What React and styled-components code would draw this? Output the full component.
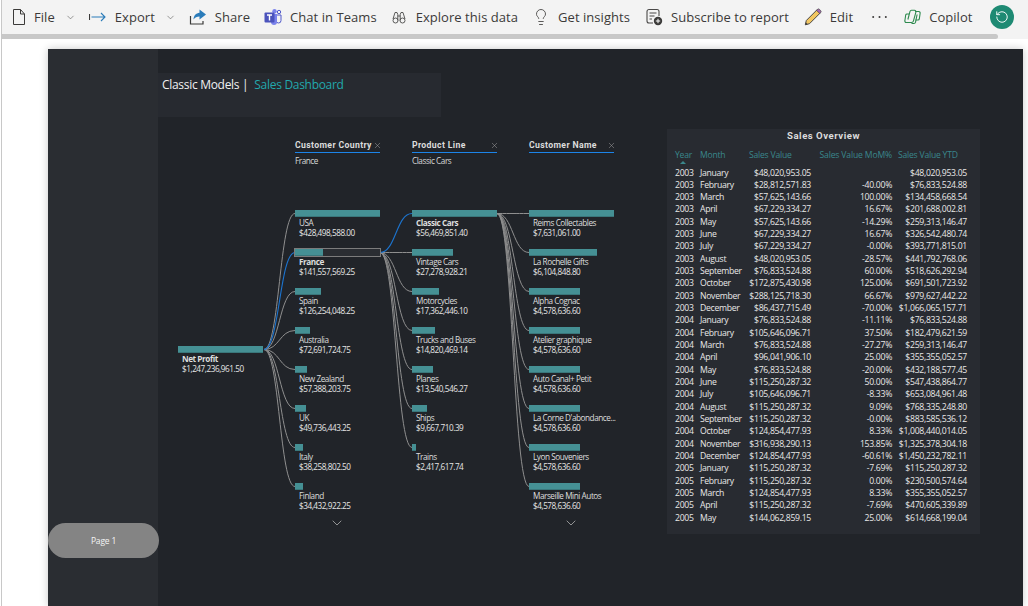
import React from 'react';
import styled, { createGlobalStyle } from 'styled-components';
import { ChevronDown, Lightbulb, RotateCcw, X } from 'lucide-react';

const GlobalStyle = createGlobalStyle`
  html, body {
    margin: 0;
    padding: 0;
    background: #fff;
    overflow: hidden;
  }
  #root {
    height: 606px;
    overflow: hidden;
  }
`;

const ROW_H = 39;
const FIRST_ROW = 96.5;
const NET_Y = 232.5;

const countries = [
  { name: 'USA', value: '$428,498,588.00', width: 85 },
  { name: 'France', value: '$141,557,569.25', width: 28, selected: true },
  { name: 'Spain', value: '$126,254,048.25', width: 26 },
  { name: 'Australia', value: '$72,691,724.75', width: 15 },
  { name: 'New Zealand', value: '$57,388,203.75', width: 12 },
  { name: 'UK', value: '$49,736,443.25', width: 11 },
  { name: 'Italy', value: '$38,258,802.50', width: 8 },
  { name: 'Finland', value: '$34,432,922.25', width: 7.5 },
];

const products = [
  { name: 'Classic Cars', value: '$56,469,851.40', width: 85, bold: true },
  { name: 'Vintage Cars', value: '$27,278,928.21', width: 41 },
  { name: 'Motorcycles', value: '$17,362,446.10', width: 27 },
  { name: 'Trucks and Buses', value: '$14,820,469.14', width: 23 },
  { name: 'Planes', value: '$13,540,546.27', width: 21 },
  { name: 'Ships', value: '$9,667,710.39', width: 15 },
  { name: 'Trains', value: '$2,417,617.74', width: 4 },
];

const customers = [
  { name: 'Reims Collectables', value: '$7,631,061.00', width: 85 },
  { name: 'La Rochelle Gifts', value: '$6,104,848.80', width: 68 },
  { name: 'Alpha Cognac', value: '$4,578,636.60', width: 51 },
  { name: 'Atelier graphique', value: '$4,578,636.60', width: 51 },
  { name: 'Auto Canal+ Petit', value: '$4,578,636.60', width: 51 },
  { name: "La Corne D'abondance...", value: '$4,578,636.60', width: 51 },
  { name: 'Lyon Souveniers', value: '$4,578,636.60', width: 51 },
  { name: 'Marseille Mini Autos', value: '$4,578,636.60', width: 51 },
];

const sales = [
  ['2003', 'January', '$48,020,953.05', '', '$48,020,953.05'],
  ['2003', 'February', '$28,812,571.83', '-40.00%', '$76,833,524.88'],
  ['2003', 'March', '$57,625,143.66', '100.00%', '$134,458,668.54'],
  ['2003', 'April', '$67,229,334.27', '16.67%', '$201,688,002.81'],
  ['2003', 'May', '$57,625,143.66', '-14.29%', '$259,313,146.47'],
  ['2003', 'June', '$67,229,334.27', '16.67%', '$326,542,480.74'],
  ['2003', 'July', '$67,229,334.27', '-0.00%', '$393,771,815.01'],
  ['2003', 'August', '$48,020,953.05', '-28.57%', '$441,792,768.06'],
  ['2003', 'September', '$76,833,524.88', '60.00%', '$518,626,292.94'],
  ['2003', 'October', '$172,875,430.98', '125.00%', '$691,501,723.92'],
  ['2003', 'November', '$288,125,718.30', '66.67%', '$979,627,442.22'],
  ['2003', 'December', '$86,437,715.49', '-70.00%', '$1,066,065,157.71'],
  ['2004', 'January', '$76,833,524.88', '-11.11%', '$76,833,524.88'],
  ['2004', 'February', '$105,646,096.71', '37.50%', '$182,479,621.59'],
  ['2004', 'March', '$76,833,524.88', '-27.27%', '$259,313,146.47'],
  ['2004', 'April', '$96,041,906.10', '25.00%', '$355,355,052.57'],
  ['2004', 'May', '$76,833,524.88', '-20.00%', '$432,188,577.45'],
  ['2004', 'June', '$115,250,287.32', '50.00%', '$547,438,864.77'],
  ['2004', 'July', '$105,646,096.71', '-8.33%', '$653,084,961.48'],
  ['2004', 'August', '$115,250,287.32', '9.09%', '$768,335,248.80'],
  ['2004', 'September', '$115,250,287.32', '-0.00%', '$883,585,536.12'],
  ['2004', 'October', '$124,854,477.93', '8.33%', '$1,008,440,014.05'],
  ['2004', 'November', '$316,938,290.13', '153.85%', '$1,325,378,304.18'],
  ['2004', 'December', '$124,854,477.93', '-60.61%', '$1,450,232,782.11'],
  ['2005', 'January', '$115,250,287.32', '-7.69%', '$115,250,287.32'],
  ['2005', 'February', '$115,250,287.32', '0.00%', '$230,500,574.64'],
  ['2005', 'March', '$124,854,477.93', '8.33%', '$355,355,052.57'],
  ['2005', 'April', '$115,250,287.32', '-7.69%', '$470,605,339.89'],
  ['2005', 'May', '$144,062,859.15', '25.00%', '$614,668,199.04'],
];

const curve = (x0, y0, x1, y1) => {
  const mid = (x0 + x1) / 2;
  return `M${x0} ${y0} C${mid} ${y0} ${mid} ${y1} ${x1} ${y1}`;
};
const rowY = (i) => FIRST_ROW + i * ROW_H;

function FileIcon() {
  return (
    <svg width="14" height="18" viewBox="0 0 14 18" fill="none" stroke="#3b3a39" strokeWidth="1">
      <path d="M1.5 1.5h7l4 4.5v10.5h-11z" />
      <path d="M8.5 1.5v4.5h4" />
    </svg>
  );
}

function ExportIcon() {
  return (
    <svg width="18" height="12" viewBox="0 0 18 12" fill="none" strokeWidth="1.1">
      <path d="M0.500 3v6" stroke="#3b3a39" />
      <path d="M2.500 6h13.500M12 2l4 4-4 4" stroke="#2b7cba" />
    </svg>
  );
}

function ShareIcon() {
  return (
    <svg width="18" height="18" viewBox="0 0 18 18">
      <path d="M1.5 8v8h12.5v-3" fill="none" stroke="#3b3a39" strokeWidth="1.2" />
      <path d="M10.5 1.5l6.5 5-6.5 5V8.6c-2.6 0-4.6.9-6 3 .2-3.900 2.400-6.400 6-6.800z" fill="#2b7cba" />
    </svg>
  );
}

function TeamsIcon() {
  return (
    <svg width="18" height="18" viewBox="0 0 18 18">
      <circle cx="10.500" cy="3.200" r="2.200" fill="#7b83eb" />
      <circle cx="15" cy="4" r="1.700" fill="none" stroke="#5059c9" strokeWidth="1" />
      <path d="M12 7h5v5.500a2.500 2.500 0 0 1-5 0z" fill="none" stroke="#5059c9" strokeWidth="1" />
      <path d="M7 6h6v8a3 3 0 0 1-6 0z" fill="#7b83eb" />
      <rect x="0.500" y="4.500" width="10" height="10" rx="1" fill="#4b53bc" />
      <path d="M3 7h5M5.500 7v5.500" stroke="#fff" strokeWidth="1.400" fill="none" />
    </svg>
  );
}

function BinocularsIcon() {
  return (
    <svg width="16" height="14" viewBox="0 0 16 14" fill="none" stroke="#4a4948" strokeWidth="0.9">
      <path d="M3 2.500h2l.8 2v6" />
      <path d="M11 2.500H9l-.8 2v6" />
      <path d="M5.800 6h2.400" />
      <path d="M3 2.500 1 9" />
      <path d="M11 2.500 13 9" />
      <circle cx="3.500" cy="10.500" r="2.500" />
      <circle cx="10.500" cy="10.500" r="2.500" />
    </svg>
  );
}

function SubscribeIcon() {
  return (
    <svg width="17" height="18" viewBox="0 0 17 18" fill="none">
      <path d="M7 15H3a2 2 0 0 1-2-2V3.500a2 2 0 0 1 2-2h8a2 2 0 0 1 2 2V8" stroke="#4a4948" strokeWidth="1.100" />
      <path d="M3.500 5h7M3.500 8h5M3.500 11h2.500" stroke="#4a4948" strokeWidth="1.100" />
      <circle cx="12" cy="13" r="4.200" fill="#3b3a39" />
      <path d="M12 10.800v4.400M9.800 13h4.400" stroke="#fff" strokeWidth="1" />
    </svg>
  );
}

function PencilIcon() {
  return (
    <svg width="18" height="18" viewBox="0 0 18 18">
      <path d="M13 1.800l3.200 3.200L5.500 15.700 1.300 16.800l1-4.300z" fill="#f2c661" stroke="#4a4948" strokeWidth="1" strokeLinejoin="round" />
      <path d="M13.300 1.500a1.600 1.600 0 0 1 2.300 0l.9.900a1.600 1.600 0 0 1 0 2.300l-.8.800-3.200-3.200z" fill="#a566b5" stroke="#4a4948" strokeWidth="0.800" />
      <path d="M1.300 16.800l.6-2.400 1.800 1.900z" fill="#3b3a39" />
    </svg>
  );
}

function CopilotIcon() {
  return (
    <svg width="17" height="16" viewBox="0 0 17 16" fill="none" stroke="#2d8a4e" strokeWidth="1.100" strokeLinejoin="round">
      <path d="M5.500 5H3a1.400 1.400 0 0 0-1.300 1L.9 11.500a1.500 1.500 0 0 0 1.400 2H7.500a2 2 0 0 0 1.900-1.400l2.500-9a1.500 1.500 0 0 0-1.400-1.900H7.500a1.600 1.600 0 0 0-1.500 1.100L3.900 10.500" />
      <path d="M11.500 11H14a1.400 1.400 0 0 0 1.300-1l.8-5.500a1.500 1.500 0 0 0-1.400-2H11" />
      <path d="M7.500 14.500H10a1.600 1.600 0 0 0 1.500-1.100L13.100 5.500" />
    </svg>
  );
}

function DotsIcon() {
  return (
    <svg width="15" height="4" viewBox="0 0 15 4" fill="#3b3a39">
      <circle cx="1.200" cy="2" r="1" />
      <circle cx="7.500" cy="2" r="1" />
      <circle cx="13.800" cy="2" r="1" />
    </svg>
  );
}

function App() {
  const netLinks = countries.map((c, i) => ({ d: curve(106, NET_Y, 137, rowY(i)), active: c.selected }));
  const countryLinks = products.map((p, i) => ({ d: curve(222, rowY(1), 254, rowY(i)), active: i === 0 }));
  const productLinks = customers.map((c, i) => ({ d: curve(339, rowY(0), 371, rowY(i)), active: false }));
  const links = [...netLinks, ...countryLinks, ...productLinks];

  return (
    <Page>
      <GlobalStyle />
      <Toolbar>
        <ToolRow>
          <ToolItem><FileIcon /><ToolText>File</ToolText><Chevron size={11} strokeWidth={1.2} /></ToolItem>
          <ToolItem $lead={-1}><ExportIcon /><ToolText>Export</ToolText><Chevron size={11} strokeWidth={1.2} /></ToolItem>
          <ToolItem $lead={-1}><ShareIcon /><ToolText>Share</ToolText></ToolItem>
          <ToolItem><TeamsIcon /><ToolText>Chat in Teams</ToolText></ToolItem>
          <ToolItem $lead={1}><BinocularsIcon /><ToolText>Explore this data</ToolText></ToolItem>
          <ToolItem><Lightbulb size={18} strokeWidth={1.1} color="#3b3a39" /><ToolText>Get insights</ToolText></ToolItem>
          <ToolItem $lead={2}><SubscribeIcon /><ToolText>Subscribe to report</ToolText></ToolItem>
          <ToolItem $lead={1}><PencilIcon /><ToolText>Edit</ToolText></ToolItem>
          <ToolItem $lead={5}><DotsIcon /></ToolItem>
          <ToolItem $lead={3}><CopilotIcon /><ToolText>Copilot</ToolText></ToolItem>
          <Avatar><RotateCcw size={14} strokeWidth={1.6} color="#fff" /></Avatar>
        </ToolRow>
        <ScrollThumb />
      </Toolbar>

      <Canvas>
        <Sidebar>
          <PageButton>Page 1</PageButton>
        </Sidebar>
        <Main>
          <TitleBox>
            <TitleText>Classic Models |</TitleText>
            <TitleAccent>Sales Dashboard</TitleAccent>
          </TitleBox>
          <Body>
            <Tree>
              <Links viewBox="0 0 509 440">
                {links.filter((l) => !l.active).map((l, i) => (
                  <path key={i} d={l.d} fill="none" stroke="#8f8f8f" strokeWidth="1" />
                ))}
                {links.filter((l) => l.active).map((l, i) => (
                  <path key={i} d={l.d} fill="none" stroke="#1c74cf" strokeWidth="1.100" />
                ))}
              </Links>
              <RootColumn>
                <TreeNode root item={{ name: 'Net Profit', value: '$1,247,236,961.50', width: 85, bold: true }} />
              </RootColumn>
              <Level title="Customer Country" picked="France" items={countries} more />
              <Level title="Product Line" picked="Classic Cars" items={products} />
              <Level title="Customer Name" items={customers} more />
            </Tree>
            <TablePanel>
              <PanelTitle>Sales Overview</PanelTitle>
              <HeadRow>
                <HeadCell>Year<SortMark /></HeadCell>
                <HeadCell>Month</HeadCell>
                <HeadCell>Sales Value</HeadCell>
                <HeadCell $right>Sales Value MoM%</HeadCell>
                <HeadCell $indent>Sales Value YTD</HeadCell>
              </HeadRow>
              {sales.map((row, i) => (
                <DataRow key={i}>
                  <Cell>{row[0]}</Cell>
                  <Cell>{row[1]}</Cell>
                  <Cell $right>{row[2]}</Cell>
                  <Cell $right>{row[3]}</Cell>
                  <Cell $right>{row[4]}</Cell>
                </DataRow>
              ))}
            </TablePanel>
          </Body>
        </Main>
      </Canvas>
    </Page>
  );
}

function Level({ title, picked, items, more }) {
  return (
    <LevelColumn>
      <LevelHead>
        <LevelTitle>
          <span>{title}</span>
          <CloseIcon size={9} strokeWidth={1.3} />
        </LevelTitle>
        <LevelPicked>{picked}</LevelPicked>
      </LevelHead>
      {items.map((item) => <TreeNode key={item.name} item={item} />)}
      {more && <MoreRow><ChevronDown size={16} strokeWidth={1.2} /></MoreRow>}
    </LevelColumn>
  );
}

function TreeNode({ item, root }) {
  return (
    <NodeWrap>
      <BarTrack $outlined={item.selected}>
        <BarFill style={{ width: item.width + 'px' }} />
      </BarTrack>
      <NodeName $bold={item.bold || item.selected}>{item.name}</NodeName>
      <NodeValue $root={root}>{item.value}</NodeValue>
    </NodeWrap>
  );
}

const Page = styled.div`
  height: 606px;
  border-left: 1px solid #c8c8c8;
  margin-left: 1px;
  font-family: "Open Sans", "Noto Sans", sans-serif;
  display: flex;
  flex-direction: column;
`;

const Toolbar = styled.div`
  background: #f3f3f3;
  height: 39px;
  flex: none;
`;

const ToolRow = styled.div`
  height: 34px;
  padding-left: 10px;
  display: flex;
  align-items: center;
  gap: 14px;
`;

const ToolItem = styled.div`
  display: flex;
  align-items: center;
  gap: 8px;
  flex: none;
  margin-left: ${(p) => p.$lead || 0}px;
`;

const ToolText = styled.span`
  font-size: 13px;
  letter-spacing: 0.05px;
  color: #3b3a39;
  white-space: nowrap;
`;

const Chevron = styled(ChevronDown)`
  color: #4a4948;
  margin-left: 2px;
`;

const Avatar = styled.div`
  width: 24px;
  height: 24px;
  margin-left: 4px;
  border-radius: 50%;
  background: #1e8a73;
  display: flex;
  align-items: center;
  justify-content: center;
  flex: none;
`;

const ScrollThumb = styled.div`
  width: 996px;
  height: 5px;
  background: #c8c8c8;
  border-radius: 0 3px 3px 0;
`;

const Canvas = styled.div`
  margin: 10px 0 0 46px;
  width: 975px;
  flex: 1;
  display: flex;
  background: #212429;
  box-shadow: 0 0 8px rgba(0, 0, 0, 0.22);
`;

const Sidebar = styled.div`
  width: 110px;
  flex: none;
  background: #2a2d32;
  padding-top: 474px;
`;

const PageButton = styled.div`
  width: 111px;
  height: 35px;
  border-radius: 18px;
  background: #848484;
  color: #f4f4f4;
  font-size: 8.5px;
  letter-spacing: -0.2px;
  display: flex;
  align-items: center;
  justify-content: center;
  position: relative;
`;

const Main = styled.div`
  flex: 1;
  padding-top: 24px;
`;

const TitleBox = styled.div`
  width: 283px;
  height: 44px;
  background: #272a30;
  padding: 4px 0 0 4px;
  box-sizing: border-box;
  display: flex;
  gap: 6px;
  font-size: 12px;
  letter-spacing: -0.3px;
  line-height: 16px;
`;

const TitleText = styled.span`
  color: #f0f0f0;
`;

const TitleAccent = styled.span`
  color: #22a8ad;
`;

const Body = styled.div`
  display: flex;
`;

const Tree = styled.div`
  width: 509px;
  flex: none;
  position: relative;
  display: flex;
  gap: 32px;
  padding: 22px 0 0 20px;
  box-sizing: border-box;
`;

const Links = styled.svg`
  position: absolute;
  left: 0;
  top: 0;
  width: 509px;
  height: 440px;
  pointer-events: none;
`;

const RootColumn = styled.div`
  width: 85px;
  flex: none;
  padding-top: 207px;
  position: relative;
`;

const LevelColumn = styled.div`
  width: 85px;
  flex: none;
  position: relative;
`;

const LevelHead = styled.div`
  height: 71px;
`;

const LevelTitle = styled.div`
  display: flex;
  justify-content: space-between;
  align-items: flex-start;
  height: 13px;
  line-height: 12px;
  border-bottom: 1.5px solid #1c84e8;
  font-family: Roboto, "Open Sans", sans-serif;
  font-size: 8.7px;
  font-weight: 700;
  letter-spacing: 0.35px;
  color: #dcdcdc;
  white-space: nowrap;
`;

const CloseIcon = styled(X)`
  color: #a8a8a8;
  flex: none;
  margin: 2px -2px 0 0;
`;

const LevelPicked = styled.div`
  margin-top: 2px;
  font-size: 8.2px;
  letter-spacing: -0.45px;
  line-height: 12px;
  color: #d8d8d8;
`;

const NodeWrap = styled.div`
  height: 39px;
  box-sizing: border-box;
`;

const BarTrack = styled.div`
  height: 7px;
  box-sizing: border-box;
  position: relative;
  background: ${(p) => (p.$outlined ? '#2a2d32' : 'transparent')};
  outline: ${(p) => (p.$outlined ? '1px solid #7c7c7c' : 'none')};
`;

const BarFill = styled.div`
  height: 100%;
  background: #459094;
  box-shadow: inset 0 -1px 0 #3a777b;
`;

const NodeName = styled.div`
  margin: 1px 0 0 4px;
  font-size: 8.2px;
  letter-spacing: -0.45px;
  line-height: 10px;
  color: #dedede;
  font-weight: ${(p) => (p.$bold ? 700 : 400)};
  white-space: nowrap;
  position: relative;
`;

const NodeValue = styled.div`
  margin-left: 4px;
  font-size: 8.2px;
  letter-spacing: -0.45px;
  line-height: ${(p) => (p.$root ? '9px' : '10px')};
  color: #e6e6e6;
  white-space: nowrap;
  position: relative;
`;

const MoreRow = styled.div`
  display: flex;
  justify-content: center;
  color: #b0b0b0;
  margin: -7px 0 0 -2px;
`;

const TablePanel = styled.div`
  width: 313px;
  height: 405px;
  margin-top: 12px;
  background: #282b31;
  padding: 0 8px;
  box-sizing: border-box;
  flex: none;
`;

const PanelTitle = styled.div`
  text-align: center;
  height: 16px;
  line-height: 13px;
  font-family: Roboto, "Open Sans", sans-serif;
  font-size: 9.6px;
  font-weight: 700;
  letter-spacing: 0.5px;
  color: #dcdcdc;
`;

const columns = '25px 49px 62px 81px 75px';

const HeadRow = styled.div`
  display: grid;
  grid-template-columns: ${columns};
  height: 21.5px;
  padding-top: 4px;
  box-sizing: border-box;
`;

const HeadCell = styled.div`
  font-size: 8.6px;
  letter-spacing: ${(p) => (p.$right ? '-0.15px' : '-0.22px')};
  line-height: 12px;
  color: #3a878c;
  white-space: nowrap;
  text-align: ${(p) => (p.$right ? 'right' : 'left')};
  padding-left: ${(p) => (p.$indent ? '6px' : '0')};
  position: relative;
`;

const SortMark = styled.div`
  width: 0;
  height: 0;
  margin: 0 0 0 5px;
  border-left: 3px solid transparent;
  border-right: 3px solid transparent;
  border-bottom: 3px solid #3a878c;
`;

const DataRow = styled.div`
  display: grid;
  grid-template-columns: ${columns};
  height: 12.34px;
`;

const Cell = styled.div`
  font-size: 8.66px;
  letter-spacing: -0.3px;
  line-height: 12.34px;
  color: #e8e8e8;
  white-space: nowrap;
  text-align: ${(p) => (p.$right ? 'right' : 'left')};
`;

export default App;
